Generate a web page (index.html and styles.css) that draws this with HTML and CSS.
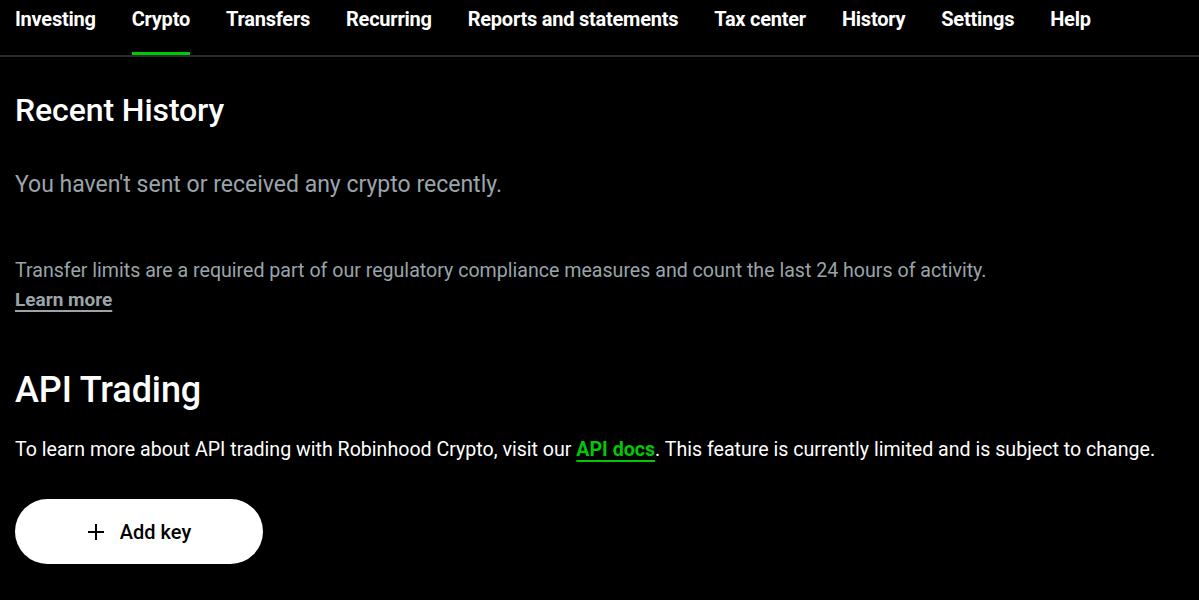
FILE: index.html
```html
<!DOCTYPE html>
<html lang="en">
<head>
<meta charset="utf-8">
<title>Crypto</title>
<link rel="stylesheet" href="styles.css">
</head>
<body>
<nav class="tabs">
  <a class="tab">Investing</a>
  <a class="tab active">Crypto</a>
  <a class="tab">Transfers</a>
  <a class="tab">Recurring</a>
  <a class="tab">Reports and statements</a>
  <a class="tab">Tax center</a>
  <a class="tab">History</a>
  <a class="tab">Settings</a>
  <a class="tab">Help</a>
</nav>
<main class="content">
  <section class="history">
    <h2 class="title">Recent History</h2>
    <p class="empty">You haven't sent or received any crypto recently.</p>
    <p class="limits">Transfer limits are a required part of our regulatory compliance measures and count the last 24 hours of activity.</p>
    <a class="learn">Learn more</a>
  </section>
  <section class="api">
    <h2 class="title big">API Trading</h2>
    <p class="desc">To learn more about API trading with Robinhood Crypto, visit our <a class="docs">API docs</a>. This feature is currently limited and is subject to change.</p>
    <button class="add">
      <svg width="18" height="18" viewBox="0 0 18 18"><path d="M9 1v16M1 9h16" stroke="#000" stroke-width="2"/></svg>
      <span>Add key</span>
    </button>
  </section>
</main>
</body>
</html>
```
FILE: styles.css
```css
html, body {
  margin: 0;
  padding: 0;
  background: #000;
  color: #fff;
  font-family: Roboto, "Liberation Sans", sans-serif;
}
.tabs {
  display: flex;
  gap: 36px;
  padding: 0 15px;
  height: 55px;
  border-bottom: 2px solid #2a2d2f;
}
.tab {
  display: flex;
  align-items: flex-start;
  padding-top: 7px;
  font-size: 20px;
  font-weight: 700;
  letter-spacing: -0.24px;
  color: #fff;
  box-sizing: border-box;
  height: 55px;
  border-bottom: 3px solid transparent;
}
.tab.active {
  border-bottom-color: #00c805;
}
.content {
  padding: 0 15px;
}
.title {
  margin: 0;
  font-size: 32px;
  font-weight: 500;
  letter-spacing: -0.1px;
  padding-top: 34px;
  line-height: 38px;
}
.empty {
  margin: 42px 0 0;
  font-size: 23px;
  line-height: 28px;
  color: #9aa4aa;
}
.limits {
  margin: 59px 0 0;
  font-size: 19.6px;
  line-height: 26px;
  color: #9aa4aa;
}
.learn {
  display: inline-block;
  font-size: 19px;
  font-weight: 700;
  color: #9aa4aa;
  text-decoration: underline;
  text-underline-offset: 4px;
  text-decoration-thickness: 2px;
  margin-top: 4px;
}
.title.big {
  font-size: 36px;
  line-height: 42px;
  padding-top: 58px;
}
.desc {
  margin: 26px 0 0;
  font-size: 19.6px;
  line-height: 26px;
}
.docs {
  color: #00c805;
  font-weight: 700;
  text-decoration: underline;
  text-underline-offset: 4px;
  text-decoration-thickness: 2px;
}
.add {
  margin-top: 36px;
  width: 248px;
  height: 65px;
  border: none;
  border-radius: 33px;
  background: #fff;
  color: #000;
  display: flex;
  align-items: center;
  justify-content: center;
  gap: 15px;
  font-family: inherit;
  font-size: 20px;
  font-weight: 500;
}
```
